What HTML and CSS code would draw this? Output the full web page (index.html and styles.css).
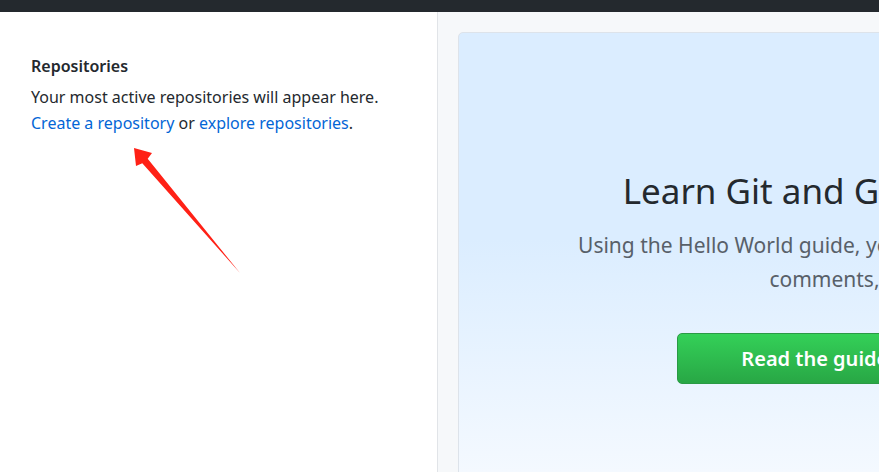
FILE: index.html
```html
<!DOCTYPE html>
<html>
<head>
<meta charset="utf-8">
<link rel="stylesheet" href="styles.css">
</head>
<body>
<header class="topbar"></header>
<div class="layout">
  <aside class="sidebar">
    <h2 class="side-title">Repositories</h2>
    <p class="side-text">Your most active repositories will appear here.<br><a href="#">Create a repository</a> or <a href="#">explore repositories</a>.</p>
    <svg class="arrow" width="120" height="140" viewBox="0 0 120 140">
      <polygon points="4,4 22,9 17.7,14.7 110,129 12.3,19.3 6,22" fill="#ff2116"/>
    </svg>
  </aside>
  <main class="content">
    <section class="card">
      <h1 class="card-title">Learn Git and GitHub without any code!</h1>
      <p class="card-text">Using the Hello World guide, you’ll create a repository, start a branch, write<br>comments, and open a pull request.</p>
      <div class="actions">
        <a class="btn btn-green" href="#">Read the guide</a>
        <a class="btn btn-plain" href="#">Start a project</a>
      </div>
    </section>
  </main>
</div>
</body>
</html>
```
FILE: styles.css
```css
* { box-sizing: border-box; }
html, body { margin: 0; padding: 0; }
body {
  width: 879px;
  height: 472px;
  overflow: hidden;
  font-family: "Noto Sans", "Open Sans", sans-serif;
  color: #24292e;
  background: #f6f8fa;
}
.topbar {
  height: 12px;
  background: #24292e;
}
.layout {
  display: flex;
  height: 460px;
}
.sidebar {
  position: relative;
  flex: 0 0 438px;
  background: #fff;
  border-right: 1px solid #e1e4e8;
  padding: 43px 0 0 31px;
}
.side-title {
  margin: 0 0 7px;
  font-size: 16px;
  font-weight: 600;
  line-height: 22px;
}
.side-text {
  margin: 0;
  font-size: 16px;
  line-height: 26px;
}
.side-text a {
  color: #0366d6;
  text-decoration: none;
}
.arrow {
  position: absolute;
  left: 130px;
  top: 132px;
}
.content {
  flex: 0 0 auto;
  padding: 20px 0 0 20px;
}
.card {
  width: 978px;
  height: 460px;
  border: 1px solid #dde3ea;
  border-radius: 5px;
  background: linear-gradient(180deg, #dbedff 0%, #dbedff 45%, #f6faff 100%);
  text-align: center;
  padding: 136px 0 0;
}
.card-title {
  margin: 0;
  font-size: 35px;
  font-weight: 400;
  line-height: 44px;
  color: #24292e;
}
.card-text {
  margin: 15px 0 0;
  font-size: 21px;
  line-height: 34px;
  color: #586069;
}
.actions {
  display: flex;
  justify-content: center;
  gap: 6px;
  margin-top: 37px;
}
.btn {
  display: inline-block;
  height: 51px;
  line-height: 49px;
  padding: 0 63px;
  border-radius: 5px;
  font-size: 20px;
  font-weight: 600;
  text-decoration: none;
}
.btn-green {
  color: #fff;
  background: linear-gradient(180deg, #34d058 0%, #28a745 100%);
  border: 1px solid #2a9a45;
}
.btn-plain {
  padding: 0 59px;
  color: #24292e;
  background: linear-gradient(180deg, #fafbfc 0%, #eff3f6 100%);
  border: 1px solid #d1d5da;
}
```
